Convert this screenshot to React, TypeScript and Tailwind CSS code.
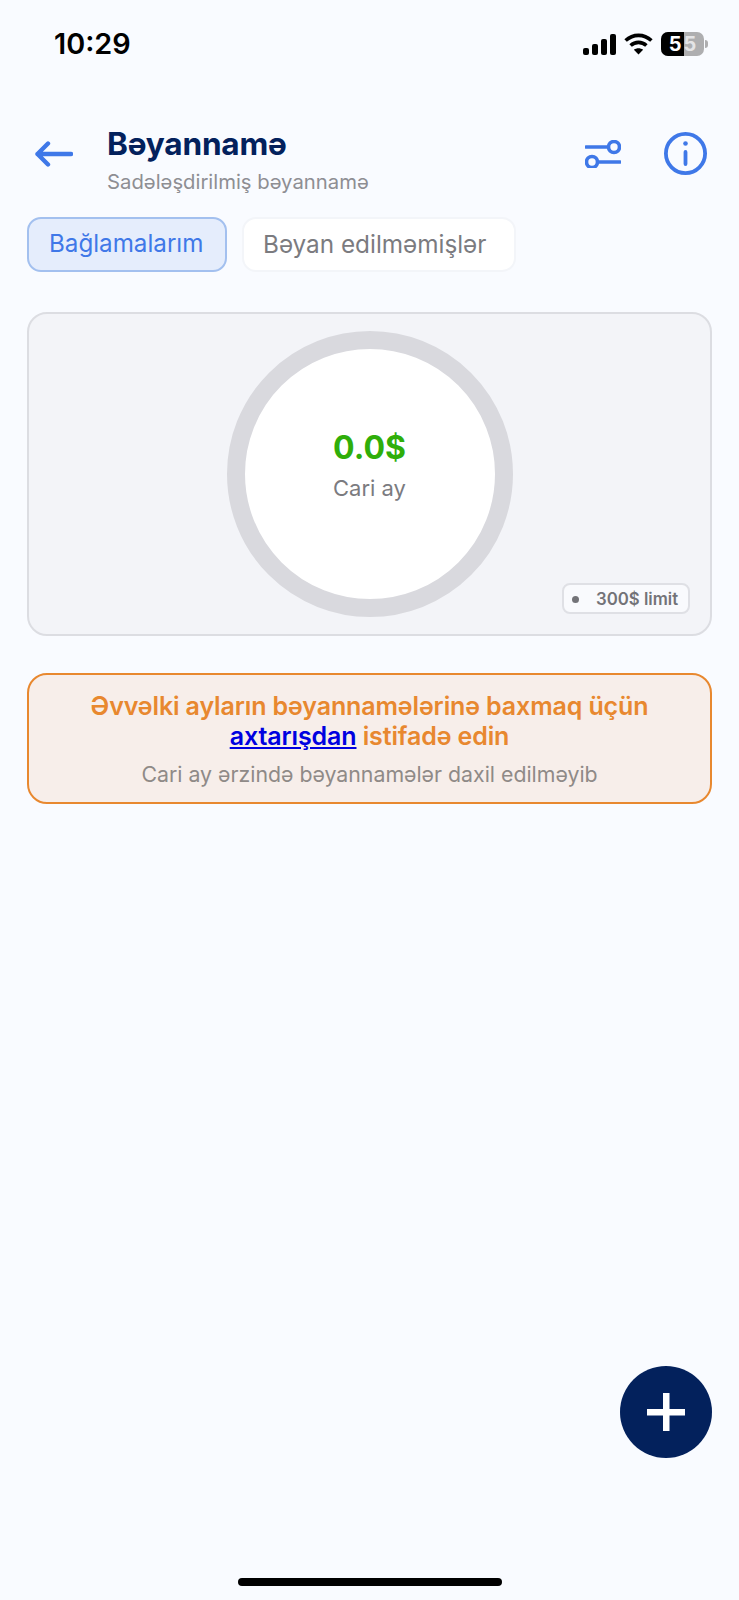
export default function App() {
  const font = { fontFamily: 'Inter, "Noto Sans", sans-serif' };
  return (
    <div style={font} className="relative flex h-[1600px] w-[739px] flex-col overflow-hidden bg-[#f9fbff]">
      <div className="flex h-[88px] shrink-0 items-center justify-between pl-[54px] pr-[31px]">
        <span className="mt-[1px] text-[28.8px] font-semibold leading-none text-black">10:29</span>
        <div className="flex items-center gap-[8px]">
          <svg width="33" height="21" viewBox="0 0 33 21" fill="#000">
            <rect x="0" y="14" width="6" height="7" rx="2" />
            <rect x="9" y="10" width="6" height="11" rx="2" />
            <rect x="18" y="5" width="6" height="16" rx="2" />
            <rect x="27" y="0" width="6" height="21" rx="2" />
          </svg>
          <svg width="29" height="22" viewBox="0 0 29 22" fill="none" stroke="#000" strokeWidth="3.6">
            <path d="M1.6 7.5C9 .6 20 .6 27.4 7.5" />
            <path d="M6.6 12.5c4.6-4.2 11.2-4.2 15.8 0" />
            <path d="M14.5 21.5l-4.6-4.8c2.7-2 6.5-2 9.2 0z" fill="#000" stroke="none" />
          </svg>
          <div className="flex items-center">
            <div className="relative flex h-[24px] w-[43px] overflow-hidden rounded-[7px] bg-[#aeaeb0]">
              <div className="h-full w-[23px] bg-black" />
              <span className="absolute inset-0 flex items-center justify-center gap-[2px] text-[20px] font-bold leading-none">
                <span className="text-white">5</span>
                <span className="text-[#e4e4e6]">5</span>
              </span>
            </div>
            <div className="ml-[1px] h-[8px] w-[3px] rounded-r-full bg-[#aeaeb0]" />
          </div>
        </div>
      </div>

      <div className="mt-[33px] flex h-[80px] shrink-0 items-start pl-[35px] pr-[32px]">
        <svg className="mt-[20px] shrink-0" width="38" height="26" viewBox="0 0 38 26" fill="none" stroke="#3f78e8" strokeWidth="4.4" strokeLinecap="round" strokeLinejoin="round">
          <path d="M2.5 13H36M13 2.5L2.5 13 13 23.5" />
        </svg>
        <div className="ml-[34px] flex flex-col pt-[5px]">
          <span className="text-[31.6px] font-bold leading-[36px] tracking-[-0.2px] text-[#03215c]">Bəyannamə</span>
          <span className="mt-[7px] text-[20.3px] leading-[26px] text-[#8e8e93]">Sadələşdirilmiş bəyannamə</span>
        </div>
        <div className="ml-auto mt-[11px] flex items-center gap-[43px]">
          <svg width="36" height="28" viewBox="0 0 36 28" fill="none" stroke="#3f78e8" strokeWidth="3.6" strokeLinecap="round">
            <path d="M1 7h22M13 22h22" />
            <circle cx="29" cy="7" r="5.5" />
            <circle cx="7" cy="22" r="5.5" />
          </svg>
          <svg width="43" height="43" viewBox="0 0 43 43" fill="none" stroke="#3f78e8" strokeWidth="3.8" strokeLinecap="round">
            <circle cx="21.5" cy="21.5" r="19.6" />
            <path d="M21.5 20v12" />
            <circle cx="21.5" cy="11.5" r="2.3" fill="#3f78e8" stroke="none" />
          </svg>
        </div>
      </div>

      <div className="mt-[16px] flex shrink-0 gap-[15px] px-[27px]">
        <div className="flex h-[55px] w-[200px] items-center rounded-[14px] border-2 border-[#a3c0ef] bg-[#e5edfc] pl-[20px] text-[24.2px] text-[#3f78e8]">Bağlamalarım</div>
        <div className="flex h-[55px] w-[274px] items-center rounded-[14px] border-2 border-[#f3f5f9] bg-white pl-[19px] text-[24.3px] text-[#7b7b7f]">Bəyan edilməmişlər</div>
      </div>

      <div className="relative mx-[27px] mt-[40px] flex h-[324px] shrink-0 items-center justify-center rounded-[20px] border-2 border-[#dcdde2] bg-[#f3f4f8]">
        <div className="flex h-[286px] w-[286px] flex-col items-center rounded-full border-[18px] border-[#d9d9de] bg-white">
          <span className="mt-[79px] text-[32px] font-bold leading-[40px] text-[#2fae0a]">0.0$</span>
          <span className="mt-[6px] text-[22px] leading-[28px] text-[#7b7b7f]">Cari ay</span>
        </div>
        <div className="absolute bottom-[20px] right-[20px] flex h-[31px] w-[128px] items-center rounded-[8px] border-2 border-[#dfe0e5] bg-[#f9fafd] pl-[8px] pt-[1px] text-[#737378]">
          <span className="h-[7px] w-[7px] rounded-full bg-[#737378]" />
          <span className="ml-[17px] text-[16.8px] font-semibold leading-none">300$ limit</span>
        </div>
      </div>

      <div className="mx-[27px] mt-[37px] flex h-[131px] shrink-0 flex-col items-center rounded-[20px] border-2 border-[#e8882f] bg-[#f7eeea] pt-[16px] text-center">
        <p className="whitespace-nowrap text-[25px] font-semibold leading-[30px] tracking-[-0.12px] text-[#e8882f]">
          Əvvəlki ayların bəyannamələrinə baxmaq üçün
          <br />
          <a className="text-[#0000e0] underline">axtarışdan</a> istifadə edin
        </p>
        <p className="mt-[10px] whitespace-nowrap text-[21.3px] leading-[26px] text-[#8f8a87]">Cari ay ərzində bəyannamələr daxil edilməyib</p>
      </div>

      <div className="mt-auto flex shrink-0 flex-col">
        <div className="mr-[27px] flex h-[92px] w-[92px] items-center justify-center self-end rounded-full bg-[#03215c]">
          <svg width="38" height="38" viewBox="0 0 38 38" fill="#fff">
            <rect x="16" y="0" width="6.5" height="38" />
            <rect x="0" y="16" width="38" height="6.5" />
          </svg>
        </div>
        <div className="mb-[14px] mt-[120px] h-[8px] w-[264px] self-center rounded-full bg-black" />
      </div>
    </div>
  );
}
